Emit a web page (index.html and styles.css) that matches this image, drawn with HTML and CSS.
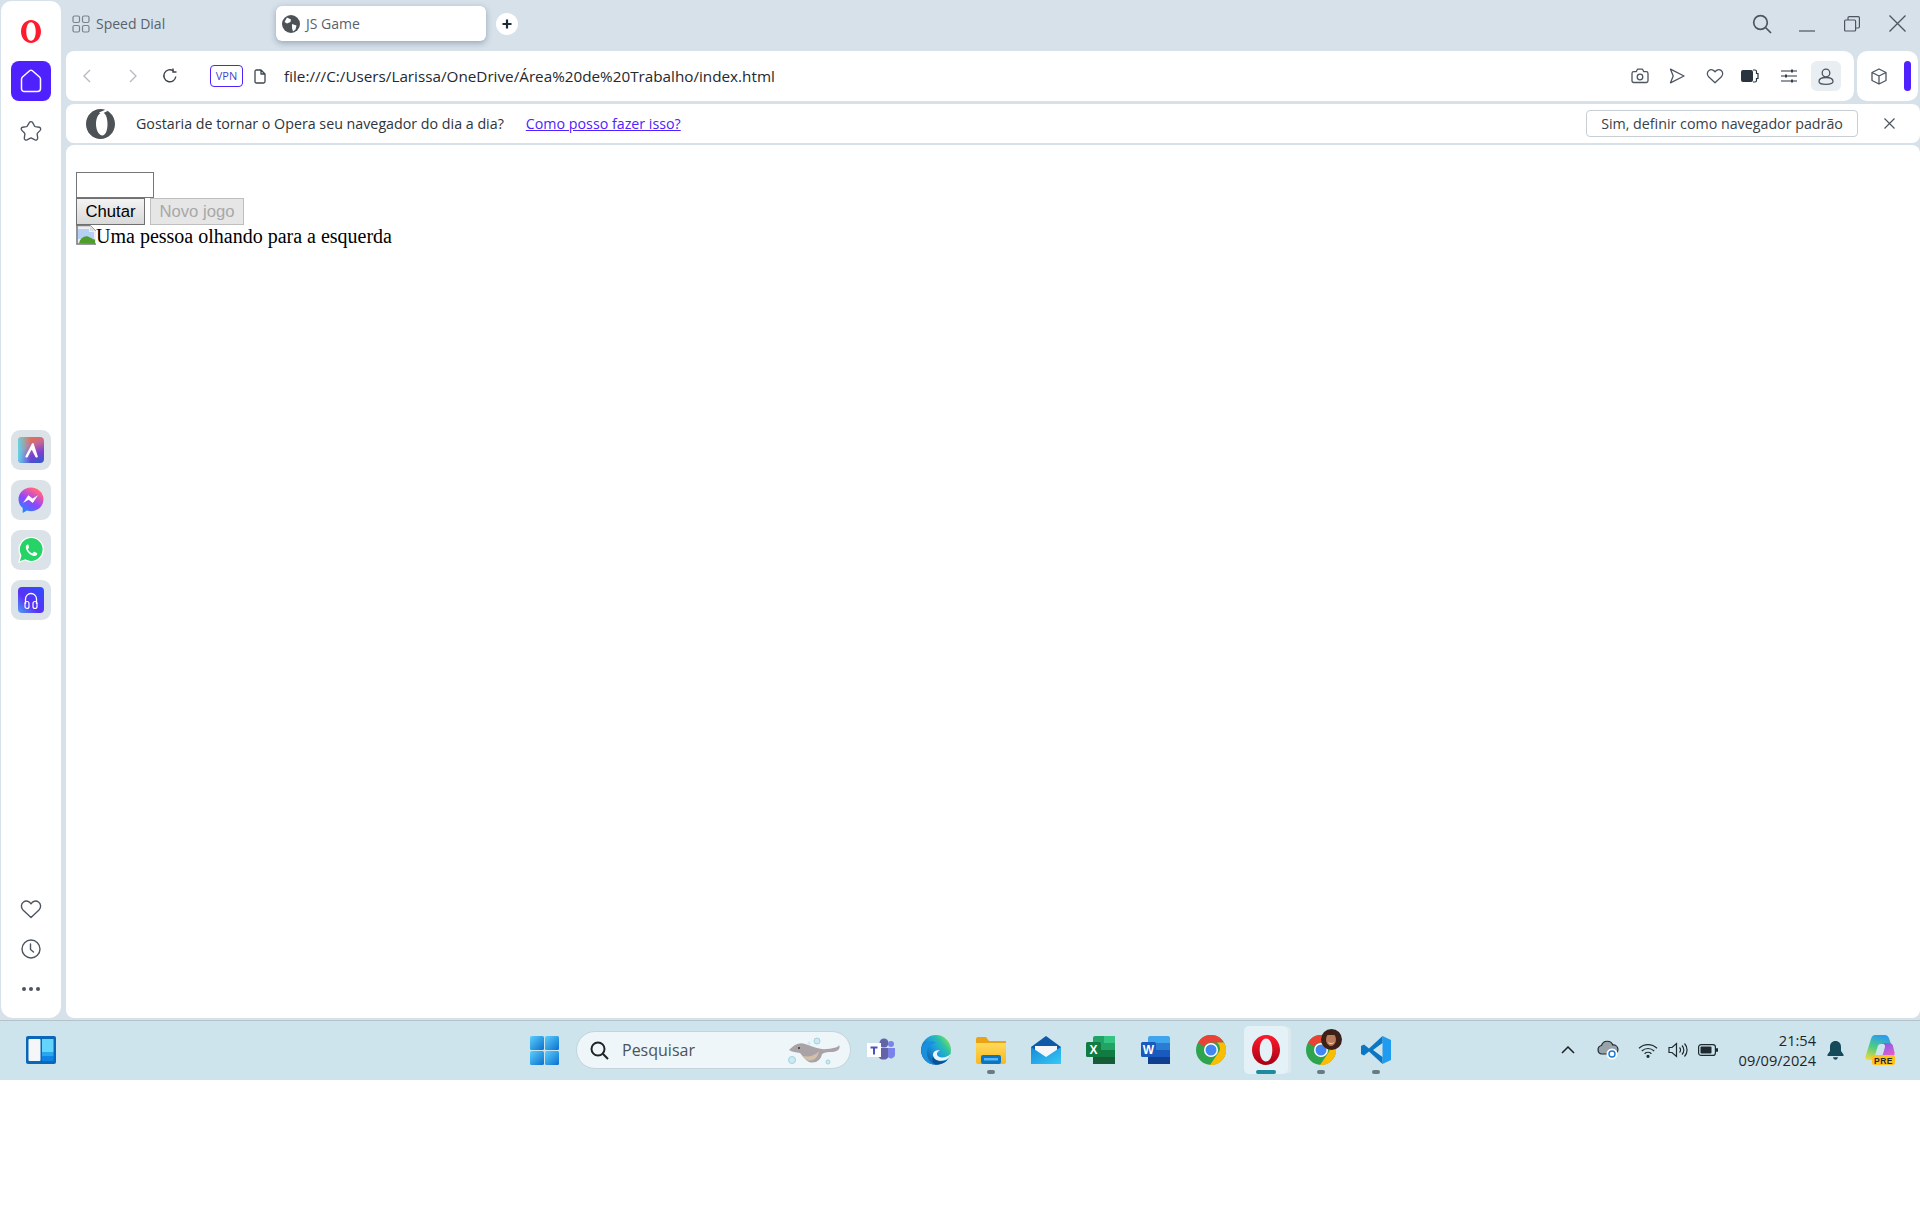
FILE: index.html
```html
<!DOCTYPE html>
<html lang="pt-BR">
<head>
<meta charset="utf-8">
<title>JS Game</title>
<link rel="stylesheet" href="styles.css">
</head>
<body>
<svg class="defs" width="0" height="0" aria-hidden="true">
  <defs>
    <linearGradient id="gAria" x1="0.3" y1="0" x2="0.7" y2="1"><stop offset="0" stop-color="#f0703c"/><stop offset=".35" stop-color="#c86a90"/><stop offset=".7" stop-color="#7b3fd6"/><stop offset="1" stop-color="#3d56c8"/></linearGradient>
    <linearGradient id="gAriaSide" x1="0" y1="0" x2="1" y2="0"><stop offset="0" stop-color="#5fd6e8"/><stop offset=".5" stop-color="#5fd6e8" stop-opacity="0"/></linearGradient>
    <linearGradient id="gMess" x1="0.2" y1="1" x2="0.8" y2="0"><stop offset="0" stop-color="#1a8cff"/><stop offset=".45" stop-color="#8f45ff"/><stop offset=".85" stop-color="#ff5f8f"/><stop offset="1" stop-color="#ff7a60"/></linearGradient>
    <linearGradient id="gMusic" x1="0" y1="1" x2="1" y2="0"><stop offset="0" stop-color="#4aa3f5"/><stop offset=".4" stop-color="#5a30f5"/><stop offset="1" stop-color="#2a50ff"/></linearGradient>
    <linearGradient id="gWin" x1="0" y1="0" x2="1" y2="1"><stop offset="0" stop-color="#5bd0fb"/><stop offset="1" stop-color="#0a6fd0"/></linearGradient>
    <linearGradient id="gEdge" x1="0.1" y1="0.8" x2="0.9" y2="0.2"><stop offset="0" stop-color="#0c59a4"/><stop offset=".5" stop-color="#1b9de2"/><stop offset=".8" stop-color="#2cc2a8"/><stop offset="1" stop-color="#6fdb6a"/></linearGradient>
    <linearGradient id="gFolder" x1="0" y1="0" x2="0" y2="1"><stop offset="0" stop-color="#ffd95c"/><stop offset="1" stop-color="#f6b821"/></linearGradient>
    <linearGradient id="gMail" x1="0" y1="0" x2="1" y2="1"><stop offset="0" stop-color="#1789d8"/><stop offset="1" stop-color="#35c9f5"/></linearGradient>
    <linearGradient id="gOpera" x1="0" y1="0" x2="0" y2="1"><stop offset="0" stop-color="#ff1b2d"/><stop offset="1" stop-color="#a70014"/></linearGradient>
    <linearGradient id="gCopL" x1="0.5" y1="0" x2="0.2" y2="1"><stop offset="0" stop-color="#2a9df0"/><stop offset=".5" stop-color="#4fce7f"/><stop offset="1" stop-color="#f3d83c"/></linearGradient>
    <linearGradient id="gCopR" x1="0.2" y1="0" x2="0.8" y2="1"><stop offset="0" stop-color="#7a5cf0"/><stop offset="1" stop-color="#f05cc8"/></linearGradient>
  </defs>
</svg>
<div class="screen">
  <div class="desktop">
    <aside class="sidebar">
      <div class="side-top">
        <svg class="side-logo" width="20" height="23" viewBox="0 0 22 26" preserveAspectRatio="none"><path fill="#ff1b2d" fill-rule="evenodd" d="M11 0C4.900 0 0 5.800 0 13s4.900 13 11 13 11-5.800 11-13S17.100 0 11 0zm0 2.500c3.300 0 5.200 4.800 5.200 10.500S14.300 23.500 11 23.500 5.800 18.700 5.800 13 7.700 2.500 11 2.500z"/></svg>
        <div class="side-home">
          <svg width="24" height="26" viewBox="0 0 24 26" fill="none" stroke="#fff" stroke-width="1.500" stroke-linejoin="round"><path d="M10.600 2.800c.8-.7 2-.7 2.800 0L20.500 9c.7.6 1 1.300 1 2.200v9.300c0 1.800-1.200 3-3 3h-13c-1.800 0-3-1.200-3-3v-9.300c0-.9.300-1.600 1-2.200z"/></svg>
        </div>
        <svg class="side-icon" width="22" height="22" viewBox="0 0 24 24" fill="none" stroke="#4d5560" stroke-width="1.500" stroke-linejoin="round"><path d="M10.200 2.800c.8-1.400 2.800-1.400 3.600 0l2 3.700c.2.400.6.600 1 .7l4.100.7c1.600.3 2.200 2.200 1.100 3.400l-2.900 3c-.3.300-.4.700-.4 1.100l.6 4.200c.2 1.600-1.400 2.800-2.900 2.100l-3.800-1.900c-.4-.2-.8-.2-1.200 0l-3.800 1.900c-1.500.7-3.100-.5-2.900-2.100l.6-4.200c0-.4-.1-.8-.4-1.100l-2.900-3C.7 10.100 1.300 8.200 2.900 7.900L7 7.200c.4-.1.800-.3 1-.7z"/></svg>
      </div>
      <div class="side-apps">
        <div class="app-tile"><svg width="26" height="26" viewBox="0 0 26 26"><rect width="26" height="26" rx="4" fill="url(#gAria)"/><rect width="26" height="26" rx="4" fill="url(#gAriaSide)"/><path d="M14 6.500 7.500 19c-.4.800.2 1.500 1 1.500s1.200-.4 1.500-1l3-6c.3-.7.800-.7 1.200 0l3 6c.3.600.7 1 1.500 1s1.400-.7 1-1.500L15.600 6.500c-.4-.8-1.200-.8-1.600 0z" fill="#fff"/></svg></div>
        <div class="app-tile"><svg width="26" height="26" viewBox="0 0 26 26"><path d="M13 .5C6.100.5.500 5.700.5 12.300c0 3.500 1.500 6.600 4.200 8.800V26l4.200-2.400c1.300.4 2.700.6 4.100.6 6.900 0 12.500-5.200 12.500-11.900S19.900.5 13 .5z" fill="url(#gMess)"/><path d="m5 16 5.300-7.800 4.200 3.300 5.500-3.300-5.200 7.800-4.200-3.300z" fill="#fff"/></svg></div>
        <div class="app-tile"><svg width="26" height="26" viewBox="0 0 26 26"><path d="M1 25l1.800-6.500A12 12 0 1 1 7.400 23z" fill="#25d366" stroke="#fff" stroke-width="1.300"/><path d="M9.500 7.500c-.6 0-1.700.9-1.700 2.800 0 3.800 4.900 8.600 8.500 8.600 2 0 2.900-1.300 2.900-1.900 0-.5 0-.9-.3-1l-2.500-1.200c-.4-.2-.6 0-.8.200l-.9 1.100c-.2.200-.4.300-.8.100-1.700-.8-3-2-3.900-3.800-.1-.3 0-.5.200-.7l.7-.9c.1-.2.200-.4 0-.7L10.500 8c-.2-.4-.5-.5-1-.5z" fill="#fff"/></svg></div>
        <div class="app-tile"><svg width="26" height="26" viewBox="0 0 26 26"><rect width="26" height="26" rx="4" fill="url(#gMusic)"/><path d="M7.500 17v-5a5.500 5.500 0 0 1 11 0v5" fill="none" stroke="#fff" stroke-width="1.300"/><rect x="7" y="14.500" width="4" height="7" rx="2" fill="none" stroke="#fff" stroke-width="1.200"/><rect x="15" y="14.500" width="4" height="7" rx="2" fill="none" stroke="#fff" stroke-width="1.200"/></svg></div>
      </div>
      <div class="side-bottom">
        <svg width="22" height="20" viewBox="0 0 22 20" fill="none" stroke="#4d5560" stroke-width="1.400" stroke-linejoin="round"><path d="M11 18.500 3 11C.6 8.600 1 4.800 3.500 3c2.600-1.800 5.800-.9 7.500 1.800C12.700 2.100 15.900 1.200 18.500 3c2.500 1.800 2.900 5.600.5 8z"/></svg>
        <svg width="20" height="20" viewBox="0 0 20 20" fill="none" stroke="#4d5560" stroke-width="1.400" stroke-linecap="round"><circle cx="10" cy="10" r="9"/><path d="M9.500 5v5.500l3 2.500"/></svg>
        <svg class="side-dots" width="20" height="6" viewBox="0 0 20 6" fill="#4d5560"><circle cx="3" cy="3" r="2"/><circle cx="10" cy="3" r="2"/><circle cx="17" cy="3" r="2"/></svg>
      </div>
    </aside>
    <main class="browser">
      <header class="tabstrip">
        <div class="tab-dial">
          <svg width="18" height="18" viewBox="0 0 18 18" fill="none" stroke="#7a828c" stroke-width="1.200"><rect x="1" y="1" width="6.500" height="6.500" rx="1.500"/><rect x="10.500" y="1" width="6.500" height="6.500" rx="1.500"/><rect x="1" y="10.500" width="6.500" height="6.500" rx="1.500"/><rect x="10.500" y="10.500" width="6.500" height="6.500" rx="1.500"/></svg>
          <span>Speed Dial</span>
        </div>
        <div class="tab-active">
          <svg width="18" height="18" viewBox="0 0 18 18"><circle cx="9" cy="9" r="9" fill="#4d5257"/><path d="M5 2.500 9 4.500 8.500 7 5 8.500 2.500 7zM10 9l4.500 1.500-1 4-2.500 2-1-3.500z" fill="#fff"/></svg>
          <span>JS Game</span>
        </div>
        <div class="tab-new">
          <svg width="12" height="12" viewBox="0 0 12 12"><path d="M6 1.500v9M1.500 6h9" stroke="#1f2a33" stroke-width="2.200"/></svg>
        </div>
        <div class="win-controls">
          <svg class="win-search" width="20" height="20" viewBox="0 0 20 20" fill="none" stroke="#4d5560" stroke-width="1.700"><circle cx="8.500" cy="8.500" r="6.800"/><path d="m13.500 13.500 5.500 5.500"/></svg>
          <svg class="win-min" width="16" height="2" viewBox="0 0 16 2"><path d="M0 1h16" stroke="#4d5560" stroke-width="1.200"/></svg>
          <svg class="win-max" width="16" height="16" viewBox="0 0 16 16" fill="none" stroke="#4d5560" stroke-width="1.200"><rect x=".6" y="4" width="11" height="11" rx="1"/><path d="M4 4V1.800c0-.7.500-1.200 1.200-1.200h9c.7 0 1.200.5 1.200 1.200v9c0 .7-.5 1.200-1.200 1.200h-2.800"/></svg>
          <svg class="win-close" width="17" height="17" viewBox="0 0 17 17"><path d="m.5.500 16 16M16.500.500l-16 16" stroke="#4d5560" stroke-width="1.300"/></svg>
        </div>
      </header>
      <div class="toolrow">
        <div class="addressbar">
          <svg class="nav-back" width="10" height="14" viewBox="0 0 10 14" fill="none" stroke="#b4bac1" stroke-width="1.300"><path d="M8 1 2 7l6 6"/></svg>
          <svg class="nav-fwd" width="10" height="14" viewBox="0 0 10 14" fill="none" stroke="#b4bac1" stroke-width="1.300"><path d="m2 1 6 6-6 6"/></svg>
          <svg class="nav-reload" width="16" height="16" viewBox="0 0 16 16" fill="none" stroke="#3d454e" stroke-width="1.400"><path d="M13.800 8.500A6 6 0 1 1 11.500 3"/><path d="M11 .5v3.500h3.500" stroke-linejoin="miter"/></svg>
          <span class="vpn">VPN</span>
          <svg class="page-icon" width="12" height="15" viewBox="0 0 12 15" fill="none" stroke="#3d454e" stroke-width="1.300" stroke-linejoin="round"><path d="M1 2.500C1 1.500 1.500 1 2.500 1H7l4 4v7.500c0 1-.5 1.500-1.500 1.500h-7c-1 0-1.500-.5-1.500-1.500zM7 1v4h4"/></svg>
          <span class="url">file:///C:/Users/Larissa/OneDrive/Área%20de%20Trabalho/index.html</span>
          <div class="tools">
            <div class="tool"><svg width="18" height="16" viewBox="0 0 18 16" fill="none" stroke="#4d5560" stroke-width="1.300" stroke-linejoin="round"><path d="M1 5.500c0-1 .7-1.800 1.700-1.800h2.500L6.500 1.200h5l1.300 2.500h2.500c1 0 1.700.8 1.700 1.800v7.300c0 1-.7 1.700-1.700 1.700H2.700c-1 0-1.700-.7-1.700-1.700z"/><circle cx="9" cy="9" r="2.800"/></svg></div>
            <div class="tool"><svg width="16" height="16" viewBox="0 0 16 16" fill="none" stroke="#4d5560" stroke-width="1.300" stroke-linejoin="round"><path d="M1.500 1.200 15 8 1.500 14.800 4.200 8z"/></svg></div>
            <div class="tool"><svg width="18" height="16" viewBox="0 0 22 20" fill="none" stroke="#4d5560" stroke-width="1.600" stroke-linejoin="round"><path d="M11 18.500 3 11C.6 8.600 1 4.800 3.500 3c2.600-1.800 5.800-.9 7.500 1.800C12.700 2.100 15.900 1.200 18.500 3c2.500 1.800 2.900 5.600.5 8z"/></svg></div>
            <div class="tool tool-left"><svg width="18" height="14" viewBox="0 0 18 14"><rect x="0" y="1" width="12" height="12" rx="2" fill="#2a3440"/><path d="M12 1h2c1 0 1.500.5 1.500 1.500v2h1.500v5h-1.500v2c0 1-.5 1.500-1.500 1.500h-2" fill="none" stroke="#2a3440" stroke-width="1.200"/></svg></div>
            <div class="tool"><svg width="16" height="14" viewBox="0 0 16 14" stroke="#2a3440" stroke-width="1.200"><path d="M0 2h16M0 7h16M0 12h16"/><path d="M11 .5v3M5 5.500v3M11 10.500v3" stroke-width="1.800"/></svg></div>
            <div class="user-tile"><svg width="16" height="17" viewBox="0 0 16 17" fill="none" stroke="#4d5560" stroke-width="1.300"><circle cx="8" cy="5" r="3.800"/><path d="M1 13.500C1 11 3.500 9.500 8 9.500s7 1.500 7 4c0 1.800-1.500 2.800-7 2.800s-7-1-7-2.800z"/></svg></div>
          </div>
        </div>
        <div class="extbar">
          <svg width="16" height="17" viewBox="0 0 16 17" fill="none" stroke="#4d5560" stroke-width="1.300" stroke-linejoin="round"><path d="M8 1 15 4.500v8L8 16l-7-3.500v-8zM1 4.500 8 8l7-3.500M8 8v8"/></svg>
          <div class="ext-bar-mark"></div>
        </div>
      </div>
      <div class="infobar">
        <svg class="info-logo" width="29" height="30" viewBox="0 0 29 30"><path fill="#4d5257" fill-rule="evenodd" d="M14.500 0C6.500 0 0 6.700 0 15s6.500 15 14.500 15S29 23.300 29 15 22.500 0 14.500 0zm1.800 3.500c3.200 0 5.200 5 5.200 11.500s-2 11.500-5.200 11.500S10 21.500 10 15 13.100 3.500 16.300 3.500z"/><path d="M13 3.500 20 .5l1.500 1.500-6 3z" fill="#fff"/></svg>
        <span class="info-text">Gostaria de tornar o Opera seu navegador do dia a dia?</span>
        <a class="info-link" href="#">Como posso fazer isso?</a>
        <span class="info-btn">Sim, definir como navegador padrão</span>
        <svg class="info-close" width="11" height="11" viewBox="0 0 11 11"><path d="m.5.500 10 10M10.500.500l-10 10" stroke="#4d5560" stroke-width="1.200"/></svg>
      </div>
      <section class="content">
        <input class="guess" type="text" aria-label="Chute">
        <div class="buttons">
          <button class="btn" type="button">Chutar</button>
          <button class="btn" type="button" disabled>Novo jogo</button>
        </div>
        <div class="alt">
          <svg width="20" height="20" viewBox="0 0 20 20"><path d="M0 0h14l6 6v14H0z" fill="#eeeeee"/><path d="M2 4h11v3h5v7H2z" fill="#b6d0f5"/><path d="M3 18.500c1-5 5-8 9-7 3 1 5 3 7 3v4.500z" fill="#4f9e2c"/><path d="M14 0v6h6z" fill="#d8dadd"/><path d="M14 0l6 6" stroke="#a0a4a8"/><path d="M1 1v18h19M0 .5h14" fill="none" stroke="#7c7f82" stroke-width="1.600"/></svg><span>Uma pessoa olhando para a esquerda</span>
        </div>
      </section>
    </main>
  </div>
  <footer class="taskbar">
    <div class="widgets">
      <svg width="30" height="28" viewBox="0 0 30 28"><rect width="30" height="28" rx="2" fill="#0a66b8"/><rect x="2.500" y="3" width="12" height="22" rx="1" fill="#f4f6f8"/><rect x="16" y="3" width="11.500" height="13" fill="#63d4fb"/><rect x="16" y="16" width="11.500" height="4.500" fill="#2aa5f0"/><rect x="16" y="20.500" width="11.500" height="4.500" fill="#0a84e8"/></svg>
    </div>
    <div class="task-center">
      <svg class="start" width="29" height="29" viewBox="0 0 29 29" fill="url(#gWin)"><rect width="14" height="14" rx="1.500"/><rect x="15" width="14" height="14" rx="1.500"/><rect y="15" width="14" height="14" rx="1.500"/><rect x="15" y="15" width="14" height="14" rx="1.500"/></svg>
      <div class="searchbox">
        <svg width="19" height="19" viewBox="0 0 19 19" fill="none" stroke="#1f2328" stroke-width="2"><circle cx="8" cy="8" r="6.500"/><path d="m12.800 12.800 5.200 5.200"/></svg>
        <span>Pesquisar</span>
        <svg class="search-art" width="56" height="34" viewBox="0 0 56 34"><circle cx="4" cy="27" r="3.500" fill="#cdeaf2" stroke="#9fd3d8"/><circle cx="29" cy="8" r="3" fill="#cdeaf2" stroke="#9fd3d8"/><circle cx="21" cy="10" r="1.500" fill="#cdeaf2"/><circle cx="40" cy="29" r="2" fill="#cdeaf2" stroke="#9fd3d8"/><path d="M1 17c5-5 10-8 16-6 7 2 14 6 22 5 6-1 11-1 12-4 2 3-1 7-7 7-4 0-6 0-10 2-1 6-6 10-13 8-4-2-6-6-9-9-4-1-8-1-11-3z" fill="#a9a3a8"/><path d="M14 23c5 1 12 1 17-5-1 7-6 11-12 9z" fill="#d4c0a8"/><circle cx="11" cy="15" r="1" fill="#333"/></svg>
      </div>
      <div class="task-apps">
        <div class="task-app"><svg width="28" height="24" viewBox="0 0 28 24"><circle cx="17" cy="5" r="4.500" fill="#6264a7"/><circle cx="24" cy="6" r="3" fill="#7b83eb"/><path d="M11 10h11v8a6 6 0 0 1-11 0z" fill="#6264a7"/><path d="M21 10h7v7a4 4 0 0 1-7 2z" fill="#7b83eb"/><rect y="5" width="14" height="14" fill="#fff"/><path d="M3.500 8.500h7v2H8v6H6v-6H3.500z" fill="#4b53bc"/></svg></div>
        <div class="task-app"><svg width="30" height="30" viewBox="0 0 30 30"><circle cx="15" cy="15" r="15" fill="url(#gEdge)"/><path d="M2 10C5 6 11 5 15 8c-5 0-9 4-9 10 0 5 3 9 7 11.500C6 29 0 23 .2 15 .3 13 1 11 2 10z" fill="#1a8fdc"/><path d="M29.500 19c-3 3.500-9 4.500-12 2.500-2.500-1.500-2-5 1.500-6-4-1-7.500 1.500-7 5 .6 4.500 7 6.500 12.500 4.500 2.500-1 4.500-3.500 5-6z" fill="#e9f5f8"/><path d="M12 21c1 4.500 7 6.500 12.500 4.500 1.500-.5 2.500-1.500 3.300-2.500-2.500 4.500-8 7-13.300 6.500-3-1.500-4-4.500-2.500-8.500z" fill="#0d4f94"/></svg></div>
        <div class="task-app is-open"><svg width="30" height="28" viewBox="0 0 30 28"><path d="M0 3c0-1 .8-2 2-2h8l3 4h17v5H0z" fill="#e8a317"/><path d="M0 7h30v19c0 1-.8 2-2 2H2c-1 0-2-1-2-2z" fill="url(#gFolder)"/><rect x="5" y="19" width="20" height="9" rx="2" fill="#0a75c4"/><rect x="8" y="22" width="14" height="2.500" fill="#55b8f2"/></svg></div>
        <div class="task-app"><svg width="30" height="28" viewBox="0 0 30 28"><path d="M15 0 30 11v17H0V11z" fill="#0d5aa8"/><path d="M4 10h22v8l-11 7-11-7z" fill="#f4f6f9"/><path d="M0 11l15 10 15-10v17H0z" fill="url(#gMail)"/></svg></div>
        <div class="task-app"><svg width="29" height="28" viewBox="0 0 29 28"><rect x="7" width="22" height="28" rx="2" fill="#21a366"/><rect x="18" width="11" height="7" fill="#33c481"/><rect x="7" y="14" width="11" height="7" fill="#107c41"/><rect x="18" y="14" width="11" height="7" fill="#107c41"/><rect x="7" y="21" width="22" height="7" fill="#185c37"/><rect y="6" width="15" height="15" rx="1.500" fill="#107c41"/><text class="office-letter" x="7.500" y="18">X</text></svg></div>
        <div class="task-app"><svg width="29" height="28" viewBox="0 0 29 28"><rect x="7" width="22" height="28" rx="2" fill="#41a5ee"/><rect x="7" y="7" width="22" height="7" fill="#2b7cd3"/><rect x="7" y="14" width="22" height="7" fill="#185abd"/><rect x="7" y="21" width="22" height="7" fill="#103f91"/><rect y="6" width="15" height="15" rx="1.500" fill="#185abd"/><text class="office-letter" x="7.500" y="18">W</text></svg></div>
        <div class="task-app">
          <svg width="30" height="30" viewBox="0 0 30 30"><circle cx="15" cy="15" r="15" fill="#2ea44f"/><path d="M2 7.500A15 15 0 0 1 28 7.500H15a7.500 7.500 0 0 0-7 4.500z" fill="#ea4335"/><path d="M28 7.500A15 15 0 0 1 14 30l7.500-11a7.500 7.500 0 0 0-.5-11.500z" fill="#fbbc04"/><circle cx="15" cy="15" r="7" fill="#fff"/><circle cx="15" cy="15" r="5.500" fill="#4285f4"/></svg>
        </div>
        <div class="task-app is-active">
          <svg width="28" height="30" viewBox="0 0 28 30"><path fill="url(#gOpera)" fill-rule="evenodd" d="M14 0C6.300 0 0 6.700 0 15s6.300 15 14 15 14-6.700 14-15S21.700 0 14 0zm0 3.500c3.900 0 6.300 5.200 6.300 11.500S17.900 26.500 14 26.500 7.700 21.300 7.700 15 10.100 3.500 14 3.500z"/></svg>
        </div>
        <div class="task-app is-open avatar-app">
          <svg width="30" height="30" viewBox="0 0 30 30"><circle cx="15" cy="15" r="15" fill="#2ea44f"/><path d="M2 7.500A15 15 0 0 1 28 7.500H15a7.500 7.500 0 0 0-7 4.500z" fill="#ea4335"/><path d="M28 7.500A15 15 0 0 1 14 30l7.500-11a7.500 7.500 0 0 0-.5-11.500z" fill="#fbbc04"/><circle cx="15" cy="15" r="7" fill="#fff"/><circle cx="15" cy="15" r="5.500" fill="#4285f4"/></svg>
          <svg class="avatar" width="21" height="21" viewBox="0 0 21 21"><circle cx="10.500" cy="10.500" r="10.500" fill="#3d2018"/><ellipse cx="10" cy="10.500" rx="5" ry="6.500" fill="#b87a58"/><path d="M5 6c2-3 8-3 10 0-3 0-7 0-10 0z" fill="#3d2018"/><path d="M7 13c2 1.500 4.500 1.500 6 0-1 2.500-5 2.500-6 0z" fill="#f4e6e0"/></svg>
        </div>
        <div class="task-app is-open"><svg width="30" height="30" viewBox="0 0 30 30"><path d="M21.500 1 30 5v20l-8.500 4z" fill="#1f9cf0"/><path d="M21.500 1 8 13.500 3 9.500 0 11v8l3 1.500 5-4L21.500 29v-7L12 15l9.500-7z" fill="#0b76c4"/></svg></div>
      </div>
    </div>
    <div class="tray">
      <svg class="tray-chevron" width="14" height="8" viewBox="0 0 14 8" fill="none" stroke="#1c2226" stroke-width="1.500"><path d="m1 7 6-6 6 6"/></svg>
      <svg class="tray-cloud" width="22" height="20" viewBox="0 0 22 20"><path d="M5 14a4.300 4.300 0 0 1-.5-8.500A6 6 0 0 1 15.800 5 4.500 4.500 0 0 1 17 14z" fill="#9ba3aa" stroke="#1f2a30" stroke-width="1.200"/><circle cx="15" cy="14" r="5.500" fill="#fff"/><circle cx="15" cy="14" r="3" fill="none" stroke="#1a78d6" stroke-width="1.400"/></svg>
      <svg class="tray-wifi" width="20" height="15" viewBox="0 0 20 15" fill="none" stroke="#1f2a30" stroke-width="1.200"><path d="M1 5.200a13 13 0 0 1 18 0M3.800 8a9 9 0 0 1 12.400 0M6.600 10.800a5 5 0 0 1 6.800 0"/><circle cx="10" cy="13.300" r="1" fill="#1f2a30"/></svg>
      <svg class="tray-vol" width="20" height="16" viewBox="0 0 20 16" fill="none" stroke="#1f2a30" stroke-width="1.200"><path d="M1 5.500h3L8.500 1.500v13L4 10.500H1zM11.500 5.500a3.500 3.500 0 0 1 0 5M14 3.500a6.500 6.500 0 0 1 0 9M16.500 1.500a9.500 9.500 0 0 1 0 13"/></svg>
      <svg class="tray-batt" width="20" height="12" viewBox="0 0 20 12"><rect x=".6" y=".6" width="16.800" height="10.800" rx="2.500" fill="none" stroke="#1f2a30" stroke-width="1.200"/><rect x="2.500" y="2.500" width="11" height="7" rx="1" fill="#1f2a30"/><rect x="18" y="4" width="2" height="4" rx="1" fill="#1f2a30"/></svg>
      <div class="clock"><span>21:54</span><span>09/09/2024</span></div>
      <svg class="tray-bell" width="17" height="19" viewBox="0 0 17 19" fill="#154a5a"><path d="M8.500 0C5 0 3 2.500 3 6v4L.5 13.500V15h16v-1.500L14 10V6c0-3.500-2-6-5.500-6zM6 16.300h5c-.3 1.500-1.300 2.500-2.500 2.500S6.300 17.800 6 16.300z"/></svg>
      <svg class="tray-copilot" width="30" height="30" viewBox="0 0 30 30"><path d="M10 0h10c2 0 3.500 1.500 4.300 4L26 9H16c-2 0-3 1-3.500 3L9.500 22c-.6 1.800-2 3-4 3H3C1 25 0 23.500.5 21.500L6 4C6.800 1.500 8 0 10 0z" fill="url(#gCopL)"/><path d="M16 8h8c2 0 3.500 1 4 3l1.500 6.500c.5 2.200-1 4.500-3.500 4.500H14c2.500 0 3.500-1.500 4-3l2-7c.4-1.600-1-4-4-4z" fill="url(#gCopR)"/><rect x="7" y="20" width="23" height="10" rx="2.500" fill="#ffc21a"/><text class="pre" x="18.500" y="28.500">PRE</text></svg>
    </div>
  </footer>
</div>
</body>
</html>
```
FILE: styles.css
```css
* { box-sizing: border-box; }
html, body { margin: 0; padding: 0; background: #fff; }
body { height: 1227px; overflow: hidden; font-family: "Open Sans", "Noto Sans", sans-serif; color: #3a4149; }
.defs { display: block; height: 0; }
svg { display: block; flex: none; }

.screen { display: flex; flex-direction: column; width: 1920px; height: 1080px; }
.desktop { display: flex; height: 1020px; background: #d6e1ea; }

/* left rail */
.sidebar { display: flex; flex-direction: column; align-items: center; width: 60px; height: 1017px; margin: 1px 0 0 1px; background: #fff; border-radius: 10px 10px 12px 12px; }
.side-top { display: flex; flex-direction: column; align-items: center; }
.side-logo { margin-top: 19px; }
.side-home { display: flex; align-items: center; justify-content: center; width: 40px; height: 40px; margin-top: 18px; background: #5021ff; border-radius: 8px; }
.side-icon { margin-top: 19px; }
.side-apps { display: flex; flex-direction: column; gap: 10px; margin-top: 288px; }
.app-tile { display: flex; align-items: center; justify-content: center; width: 40px; height: 40px; background: #dbe3e9; border-radius: 9px; }
.side-bottom { display: flex; flex-direction: column; align-items: center; gap: 20px; margin-top: auto; padding-bottom: 26px; }
.side-dots { margin-top: 7px; }

/* browser chrome */
.browser { display: flex; flex-direction: column; flex: 1; min-width: 0; margin-left: 5px; }
.tabstrip { display: flex; align-items: flex-start; height: 51px; padding: 6px 0 0 6px; font-size: 14px; flex: none; }
.tab-dial { display: flex; align-items: center; gap: 6px; width: 204px; height: 35px; color: #59626c; }
.tab-active { display: flex; align-items: center; gap: 6px; width: 210px; height: 35px; padding-left: 6px; background: #fff; border-radius: 6px; box-shadow: 0 2px 6px rgba(70, 90, 110, .45); color: #59626c; }
.tab-new { display: flex; align-items: center; justify-content: center; width: 22px; height: 22px; margin: 7px 0 0 10px; background: #fff; border-radius: 50%; }
.win-controls { display: flex; align-items: center; height: 35px; margin-left: auto; padding-right: 14px; }
.win-min { margin: 14px 0 0 27px; }
.win-max { margin-left: 29px; }
.win-close { margin-left: 29px; }

.toolrow { display: flex; gap: 3px; height: 50px; flex: none; padding-right: 2px; }
.addressbar { display: flex; align-items: center; flex: 1; min-width: 0; padding-left: 16px; background: #fff; border-radius: 8px 10px 10px 8px; font-size: 15.260px; }
.nav-fwd { margin-left: 36px; }
.nav-reload { margin-left: 24px; }
.vpn { width: 33px; height: 22px; margin-left: 32px; border: 1px solid #5021ff; border-radius: 4px; color: #4a3fc9; font-size: 11px; line-height: 20px; text-align: center; }
.page-icon { margin-left: 11px; }
.url { margin-left: 18px; color: #23292f; white-space: nowrap; }
.tools { display: flex; align-items: center; margin-left: auto; padding-right: 13px; }
.tool { display: flex; align-items: center; justify-content: center; width: 37.400px; }
.tool-left { padding-right: 3px; }
.user-tile { display: flex; align-items: center; justify-content: center; width: 30px; height: 30px; margin-left: 3px; background: #e9eef2; border-radius: 6px; }
.extbar { display: flex; align-items: center; justify-content: flex-end; gap: 17px; width: 61px; padding-right: 7px; background: #fff; border-radius: 10px; }
.ext-bar-mark { width: 7px; height: 30px; background: #5021ff; border-radius: 4px; }

.infobar { display: flex; align-items: center; height: 39px; margin-top: 3px; padding-left: 20px; background: #fff; border-radius: 8px; font-size: 14.250px; flex: none; }
.info-text { margin-left: 21px; color: #2d343b; }
.info-link { margin-left: 22px; color: #5021ff; }
.info-btn { margin-left: auto; width: 272px; height: 27px; border: 1px solid #c7ced4; border-radius: 4px; color: #3a4149; line-height: 25px; text-align: center; }
.info-close { margin: 0 25px 0 26px; }

/* page under test */
.content { flex: 1; margin: 2px 0 2px; padding: 27px 0 0 10px; background: #fff; border-radius: 8px; font-family: "Liberation Sans", Arial, sans-serif; }
.guess { display: block; width: 78px; height: 26px; margin: 0; padding: 0; border: 1px solid #767676; background: #fff; }
.buttons { display: flex; gap: 5px; }
.btn { width: 69px; height: 27px; padding: 0; border: 1px solid #707070; background: linear-gradient(#f3f3f3, #d9d9d9); color: #000; font: 16.670px "Liberation Sans", Arial, sans-serif; }
.btn:disabled { width: 94px; border: 1px solid #bfbfbf; background: #e6e6e6; color: #a8a8a8; }
.alt { display: flex; align-items: flex-start; height: 23px; font: 20px/22px "Liberation Serif", "Times New Roman", serif; color: #000; }

/* OS taskbar */
.taskbar { display: flex; align-items: center; height: 60px; padding: 0 0 1px 26px; background: #cde4ec; border-top: 1px solid #b4c2ca; flex: none; }
.widgets { width: 30px; }
.task-center { display: flex; align-items: center; margin-left: 474px; }
.searchbox { display: flex; align-items: center; width: 275px; height: 38px; margin-left: 17px; padding-left: 13px; background: #eef6f9; border: 1px solid #c3d4da; border-radius: 19px; color: #4b5258; font-size: 16px; }
.searchbox span { margin-left: 13px; }
.search-art { margin-left: auto; margin-right: 6px; }
.task-apps { display: flex; margin-left: 2px; }
.task-app { position: relative; display: flex; align-items: center; justify-content: center; width: 55px; height: 48px; }
.is-open::after { content: ""; position: absolute; left: 50%; bottom: 0; width: 8px; height: 4px; margin-left: -4px; background: #6c7b83; border-radius: 2px; }
.is-active { width: 44px; margin: 0 5px 0 6px; background: #e4f1f6; border-radius: 5px; box-shadow: 4px 0 0 -1px #dceaf0; }
.is-active::after { content: ""; position: absolute; left: 50%; bottom: 0; width: 20px; height: 4px; margin-left: -10px; background: #1f8a9c; border-radius: 2px; }
.avatar { position: absolute; left: 28px; top: 3px; }
.office-letter { fill: #fff; font: 700 12px "Liberation Sans", Arial, sans-serif; text-anchor: middle; }
.tray { display: flex; align-items: center; margin-left: auto; }
.tray-cloud { margin-left: 22px; }
.tray-wifi { margin-left: 19px; }
.tray-vol { margin-left: 10px; }
.tray-batt { margin-left: 10px; }
.clock { display: flex; flex-direction: column; align-items: flex-end; width: 98px; color: #1f262b; font-size: 14.600px; line-height: 20px; }
.tray-bell { margin-left: 11px; }
.tray-copilot { margin: 0 25px 0 21px; }
.pre { fill: #1f2a30; font: 800 8.500px "Liberation Sans", Arial, sans-serif; text-anchor: middle; letter-spacing: .5px; }
```
